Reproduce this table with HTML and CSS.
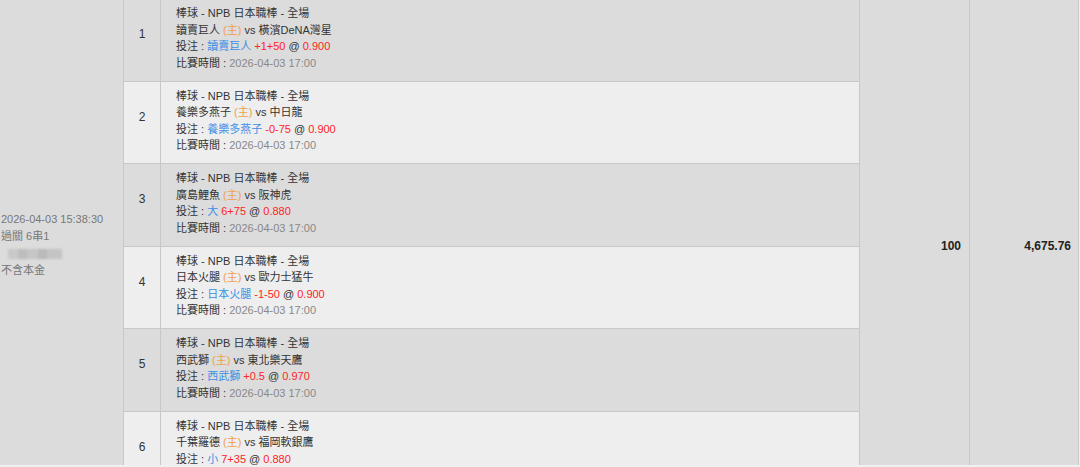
FILE: index.html
```html
<!DOCTYPE html>
<html lang="zh-Hant">
<head>
<meta charset="utf-8">
<title>Bet detail</title>
<link rel="stylesheet" href="styles.css">
</head>
<body>
<div class="viewport">
  <div class="grid">
    <div class="info">
      <div>2026-04-03 15:38:30</div>
      <div>過關 6串1</div>
      <div class="masked"><span class="blur"></span></div>
      <div>不含本金</div>
    </div>

    <div class="num odd">1</div>
    <div class="bet odd">
      <div>棒球 - NPB 日本職棒 - 全場</div>
      <div>讀賣巨人 <span class="home">(主)</span> vs 橫濱DeNA灣星</div>
      <div>投注 : <span class="pick">讀賣巨人</span> <span class="odds">+1+50</span> @ <span class="odds">0.900</span></div>
      <div>比賽時間 : <span class="time">2026-04-03 17:00</span></div>
    </div>

    <div class="num even">2</div>
    <div class="bet even">
      <div>棒球 - NPB 日本職棒 - 全場</div>
      <div>養樂多燕子 <span class="home">(主)</span> vs 中日龍</div>
      <div>投注 : <span class="pick">養樂多燕子</span> <span class="odds">-0-75</span> @ <span class="odds">0.900</span></div>
      <div>比賽時間 : <span class="time">2026-04-03 17:00</span></div>
    </div>

    <div class="num odd">3</div>
    <div class="bet odd">
      <div>棒球 - NPB 日本職棒 - 全場</div>
      <div>廣島鯉魚 <span class="home">(主)</span> vs 阪神虎</div>
      <div>投注 : <span class="pick">大</span> <span class="odds">6+75</span> @ <span class="odds">0.880</span></div>
      <div>比賽時間 : <span class="time">2026-04-03 17:00</span></div>
    </div>

    <div class="num even">4</div>
    <div class="bet even">
      <div>棒球 - NPB 日本職棒 - 全場</div>
      <div>日本火腿 <span class="home">(主)</span> vs 歐力士猛牛</div>
      <div>投注 : <span class="pick">日本火腿</span> <span class="odds">-1-50</span> @ <span class="odds">0.900</span></div>
      <div>比賽時間 : <span class="time">2026-04-03 17:00</span></div>
    </div>

    <div class="num odd">5</div>
    <div class="bet odd">
      <div>棒球 - NPB 日本職棒 - 全場</div>
      <div>西武獅 <span class="home">(主)</span> vs 東北樂天鷹</div>
      <div>投注 : <span class="pick">西武獅</span> <span class="odds">+0.5</span> @ <span class="odds">0.970</span></div>
      <div>比賽時間 : <span class="time">2026-04-03 17:00</span></div>
    </div>

    <div class="num even">6</div>
    <div class="bet even">
      <div>棒球 - NPB 日本職棒 - 全場</div>
      <div>千葉羅德 <span class="home">(主)</span> vs 福岡軟銀鷹</div>
      <div>投注 : <span class="pick">小</span> <span class="odds">7+35</span> @ <span class="odds">0.880</span></div>
      <div>比賽時間 : <span class="time">2026-04-03 17:00</span></div>
    </div>

    <div class="amount stake">100</div>
    <div class="amount payout">4,675.76</div>
  </div>
</div>
</body>
</html>
```

FILE: styles.css
```css
html, body {
  margin: 0;
  padding: 0;
  background: #f0f0f0;
}

body {
  font-family: "Liberation Sans", "Noto Sans CJK TC", Arial, sans-serif;
  font-size: 11px;
  color: #333;
}

.viewport {
  width: 1080px;
  height: 465px;
  overflow: hidden;
}

.grid {
  display: grid;
  grid-template-columns: 123px 36px 698px 109px 108px;
  gap: 1px;
  background: #c8c8c8;
  padding-right: 1px;
  width: max-content;
  margin-top: -1px;
}

.info {
  grid-column: 1;
  grid-row: 1 / 7;
  background: #dcdcdc;
  color: #777;
  line-height: 17px;
  padding-left: 1px;
  display: flex;
  flex-direction: column;
  justify-content: center;
  padding-bottom: 2px;
}

.masked {
  height: 17px;
  display: flex;
  align-items: center;
}

.blur {
  display: block;
  width: 54px;
  height: 10px;
  margin-left: 7px;
  background:
    linear-gradient(90deg, #c9c9c9 0 18%, #bdbdbd 18% 36%, #c6c6c6 36% 55%, #bababa 55% 72%, #c4c4c4 72% 100%);
  filter: blur(1.2px);
}

.odd { background: #dcdcdc; }
.even { background: #eeeeee; }

.num {
  grid-column: 2;
  display: flex;
  align-items: center;
  justify-content: center;
  font-size: 12px;
  color: #333;
  padding-bottom: 11px;
}

.bet {
  grid-column: 3;
  line-height: 16.5px;
  padding: 6px 0 9.5px 15px;
  color: #333;
}

.home { color: #f0a04b; }
.pick { color: #3d8ee6; }
.odds { color: #ff2424; }
.time { color: #888; }

.amount {
  grid-row: 1 / 7;
  background: #dcdcdc;
  display: flex;
  align-items: center;
  justify-content: flex-end;
  font-size: 12px;
  font-weight: bold;
  color: #222;
}

.stake {
  grid-column: 4;
  padding-right: 8px;
}

.payout {
  grid-column: 5;
  padding-right: 7px;
}
```
